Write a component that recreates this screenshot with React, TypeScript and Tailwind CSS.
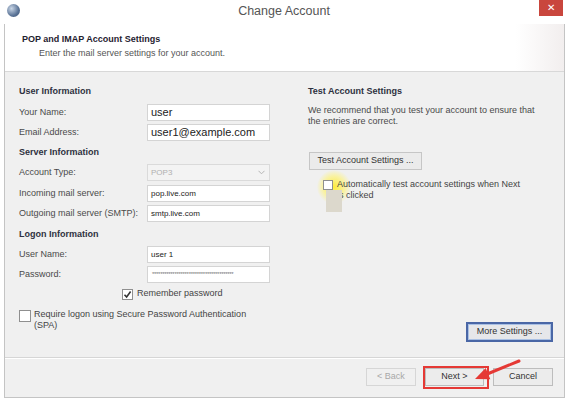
import React from 'react';

const font = "font-['Liberation_Sans',Arial,sans-serif]";

const Heading = ({ children, className = '' }: { children: React.ReactNode; className?: string }) => (
  <div className={`h-[12px] text-[9px] leading-[12px] font-bold text-[#2e3140] ${className}`}>{children}</div>
);

interface FieldProps {
  label: string;
  children: React.ReactNode;
  className?: string;
}

const Field: React.FC<FieldProps> = ({ label, children, className = '' }) => (
  <div className={`flex items-center h-[17px] ${className}`}>
    <span className="w-[128px] shrink-0 text-[9px] text-[#4a4a4a]">{label}</span>
    {children}
  </div>
);

const TextBox = ({ value, big = false }: { value: string; big?: boolean }) => (
  <div
    className={`w-[123px] h-[17px] flex items-center bg-white border border-[#d4d4d4] pl-[3px] text-[#222] ${
      big ? 'text-[11px]' : 'text-[8px]'
    }`}
  >
    {value}
  </div>
);

const Check = ({ checked = false, size = 11 }: { checked?: boolean; size?: number }) => (
  <div
    style={{ width: size, height: size }}
    className="shrink-0 bg-white border border-[#8f8f8f] flex items-center justify-center"
  >
    {checked && (
      <svg width="9" height="9" viewBox="0 0 9 9">
        <path d="M1.5 4.8 L3.6 7 L7.6 1.6" fill="none" stroke="#333" strokeWidth="1.6" />
      </svg>
    )}
  </div>
);

export default function App() {
  return (
    <div className={`relative w-[568px] h-[400px] bg-white overflow-hidden ${font}`}>
      {/* title bar */}
      <div className="relative h-[24px] flex items-center justify-center">
        <div className="absolute left-[7px] top-[4px] w-[13px] h-[13px] rounded-full bg-[radial-gradient(circle_at_35%_35%,#c9d6e6,#5a7396_60%,#3b5070)]" />
        <span className="text-[12.5px] text-[#555] mt-[-1px]">Change Account</span>
        <div className="absolute right-[5px] top-0 w-[24px] h-[16px] bg-[#c9463d] flex items-center justify-center text-white text-[10px] leading-none">
          ✕
        </div>
      </div>

      {/* window */}
      <div className="ml-[4px] w-[561px] h-[374px] border-x border-b border-[#c4c4c4] flex flex-col">
        <div className="h-[48px] bg-white border-b border-[#d8d8d8] flex">
          <div className="flex-1 pl-[17px] pt-[9px]">
            <div className="text-[9px] font-bold text-[#1f2230] leading-[12px]">POP and IMAP Account Settings</div>
            <div className="text-[9px] text-[#555] leading-[12px] mt-[2px] pl-[17px]">
              Enter the mail server settings for your account.
            </div>
          </div>
          <div className="w-[48px] bg-[linear-gradient(90deg,#ffffff,#f2eeee)]" />
        </div>

        {/* body */}
        <div className="flex-1 bg-[#f0f0f0] flex pl-[14px] pr-[11px]">
          <div className="w-[251px] flex flex-col">
            <Heading className="mt-[13px]">User Information</Heading>
            <Field label="Your Name:" className="mt-[7px]">
              <TextBox value="user" big />
            </Field>
            <Field label="Email Address:" className="mt-[3px]">
              <TextBox value="user1@example.com" big />
            </Field>
            <Heading className="mt-[5px]">Server Information</Heading>
            <Field label="Account Type:" className="mt-[6px]">
              <div className="w-[123px] h-[17px] flex items-center justify-between bg-[#f3f3f3] border border-[#dadada] pl-[3px] pr-[4px] text-[8px] text-[#b0b0b0]">
                POP3
                <svg width="7" height="5" viewBox="0 0 7 5">
                  <path d="M0.5 0.8 L3.5 3.8 L6.5 0.8" fill="none" stroke="#b5b5b5" strokeWidth="1" />
                </svg>
              </div>
            </Field>
            <Field label="Incoming mail server:" className="mt-[4px]">
              <TextBox value="pop.live.com" />
            </Field>
            <Field label="Outgoing mail server (SMTP):" className="mt-[3px]">
              <TextBox value="smtp.live.com" />
            </Field>
            <Heading className="mt-[6px]">Logon Information</Heading>
            <Field label="User Name:" className="mt-[6px]">
              <TextBox value="user 1" />
            </Field>
            <Field label="Password:" className="mt-[3px]">
              <div className="w-[123px] h-[17px] flex items-center bg-white border border-[#d4d4d4] pl-[4px] text-[6px] tracking-[-0.3px] text-[#777] overflow-hidden whitespace-nowrap">
                ****************************************
              </div>
            </Field>
            <div className="flex items-center gap-[4px] h-[14px] mt-[4px] pl-[103px]">
              <Check checked />
              <span className="text-[9px] text-[#444]">Remember password</span>
            </div>
            <div className="flex gap-[3px] mt-[9px]">
              <Check size={12} />
              <span className="text-[9px] leading-[11px] text-[#444] mt-[-1px]">
                Require logon using Secure Password Authentication
                <br />
                (SPA)
              </span>
            </div>
          </div>

          <div className="ml-[38px] flex-1 flex flex-col">
            <Heading className="mt-[13px]">Test Account Settings</Heading>
            <p className="mt-[8px] text-[9px] leading-[11px] text-[#4a4a4a]">
              We recommend that you test your account to ensure that
              <br />
              the entries are correct.
            </p>
            <div className="mt-[25px] ml-[1px] w-[113px] h-[18px] bg-[#ebebeb] border border-[#c6c6c6] flex items-center justify-center text-[9px] text-[#333]">
              Test Account Settings ...
            </div>
            <div className="relative flex gap-[4px] mt-[9px] pl-[15px]">
              <div className="absolute left-[9px] top-[-9px] w-[34px] h-[34px] rounded-full bg-[radial-gradient(circle,rgba(255,236,40,0.9)_0%,rgba(255,243,110,0.6)_45%,rgba(255,250,180,0)_72%)]" />
              <div className="relative mt-[1px]">
                <Check size={10} />
              </div>
              <span className="relative text-[9px] leading-[11px] text-[#444]">
                Automatically test account settings when Next
                <br />
                is clicked
              </span>
              <div className="absolute left-[18px] top-[11px] w-[16px] h-[22px] bg-[#dcd8cc]" />
            </div>
            <div className="mt-auto mb-[15px] self-end w-[87px] h-[20px] bg-[#e6e7ea] border-[2px] border-[#4a67a6] shadow-[inset_0_0_0_1px_#a9c0e4] flex items-center justify-center text-[9px] text-[#333]">
              More Settings ...
            </div>
          </div>
        </div>

        {/* footer */}
        <div className="h-[2px] border-t border-[#d6d6d6] bg-white" />
        <div className="h-[38px] bg-[#f0f0f0] flex items-start justify-end gap-[9px] pt-[9px] pr-[11px]">
          <div className="w-[50px] h-[18px] bg-[#f0f0f0] border border-[#d6d6d6] flex items-center justify-center text-[9px] text-[#a8a8a8]">
            &lt; Back
          </div>
          <div className="relative w-[59px] h-[18px] bg-[#ececec] border border-[#bdbdbd] flex items-center justify-center text-[9px] text-[#333]">
            Next &gt;
            <div className="absolute left-[-3px] top-[-3px] w-[66px] h-[23px] border-[2px] border-[#e53935]" />
          </div>
          <div className="w-[60px] h-[18px] bg-[#ececec] border border-[#bdbdbd] flex items-center justify-center text-[9px] text-[#333]">
            Cancel
          </div>
        </div>
      </div>

      {/* red arrow overlay */}
      <svg className="absolute left-0 top-0 pointer-events-none" width="568" height="400">
        <line x1="519" y1="361" x2="486" y2="374.5" stroke="#e53935" strokeWidth="3" strokeLinecap="round" />
        <polygon points="475,379 490.3,379.3 485.7,368.1" fill="#e53935" />
      </svg>
    </div>
  );
}
